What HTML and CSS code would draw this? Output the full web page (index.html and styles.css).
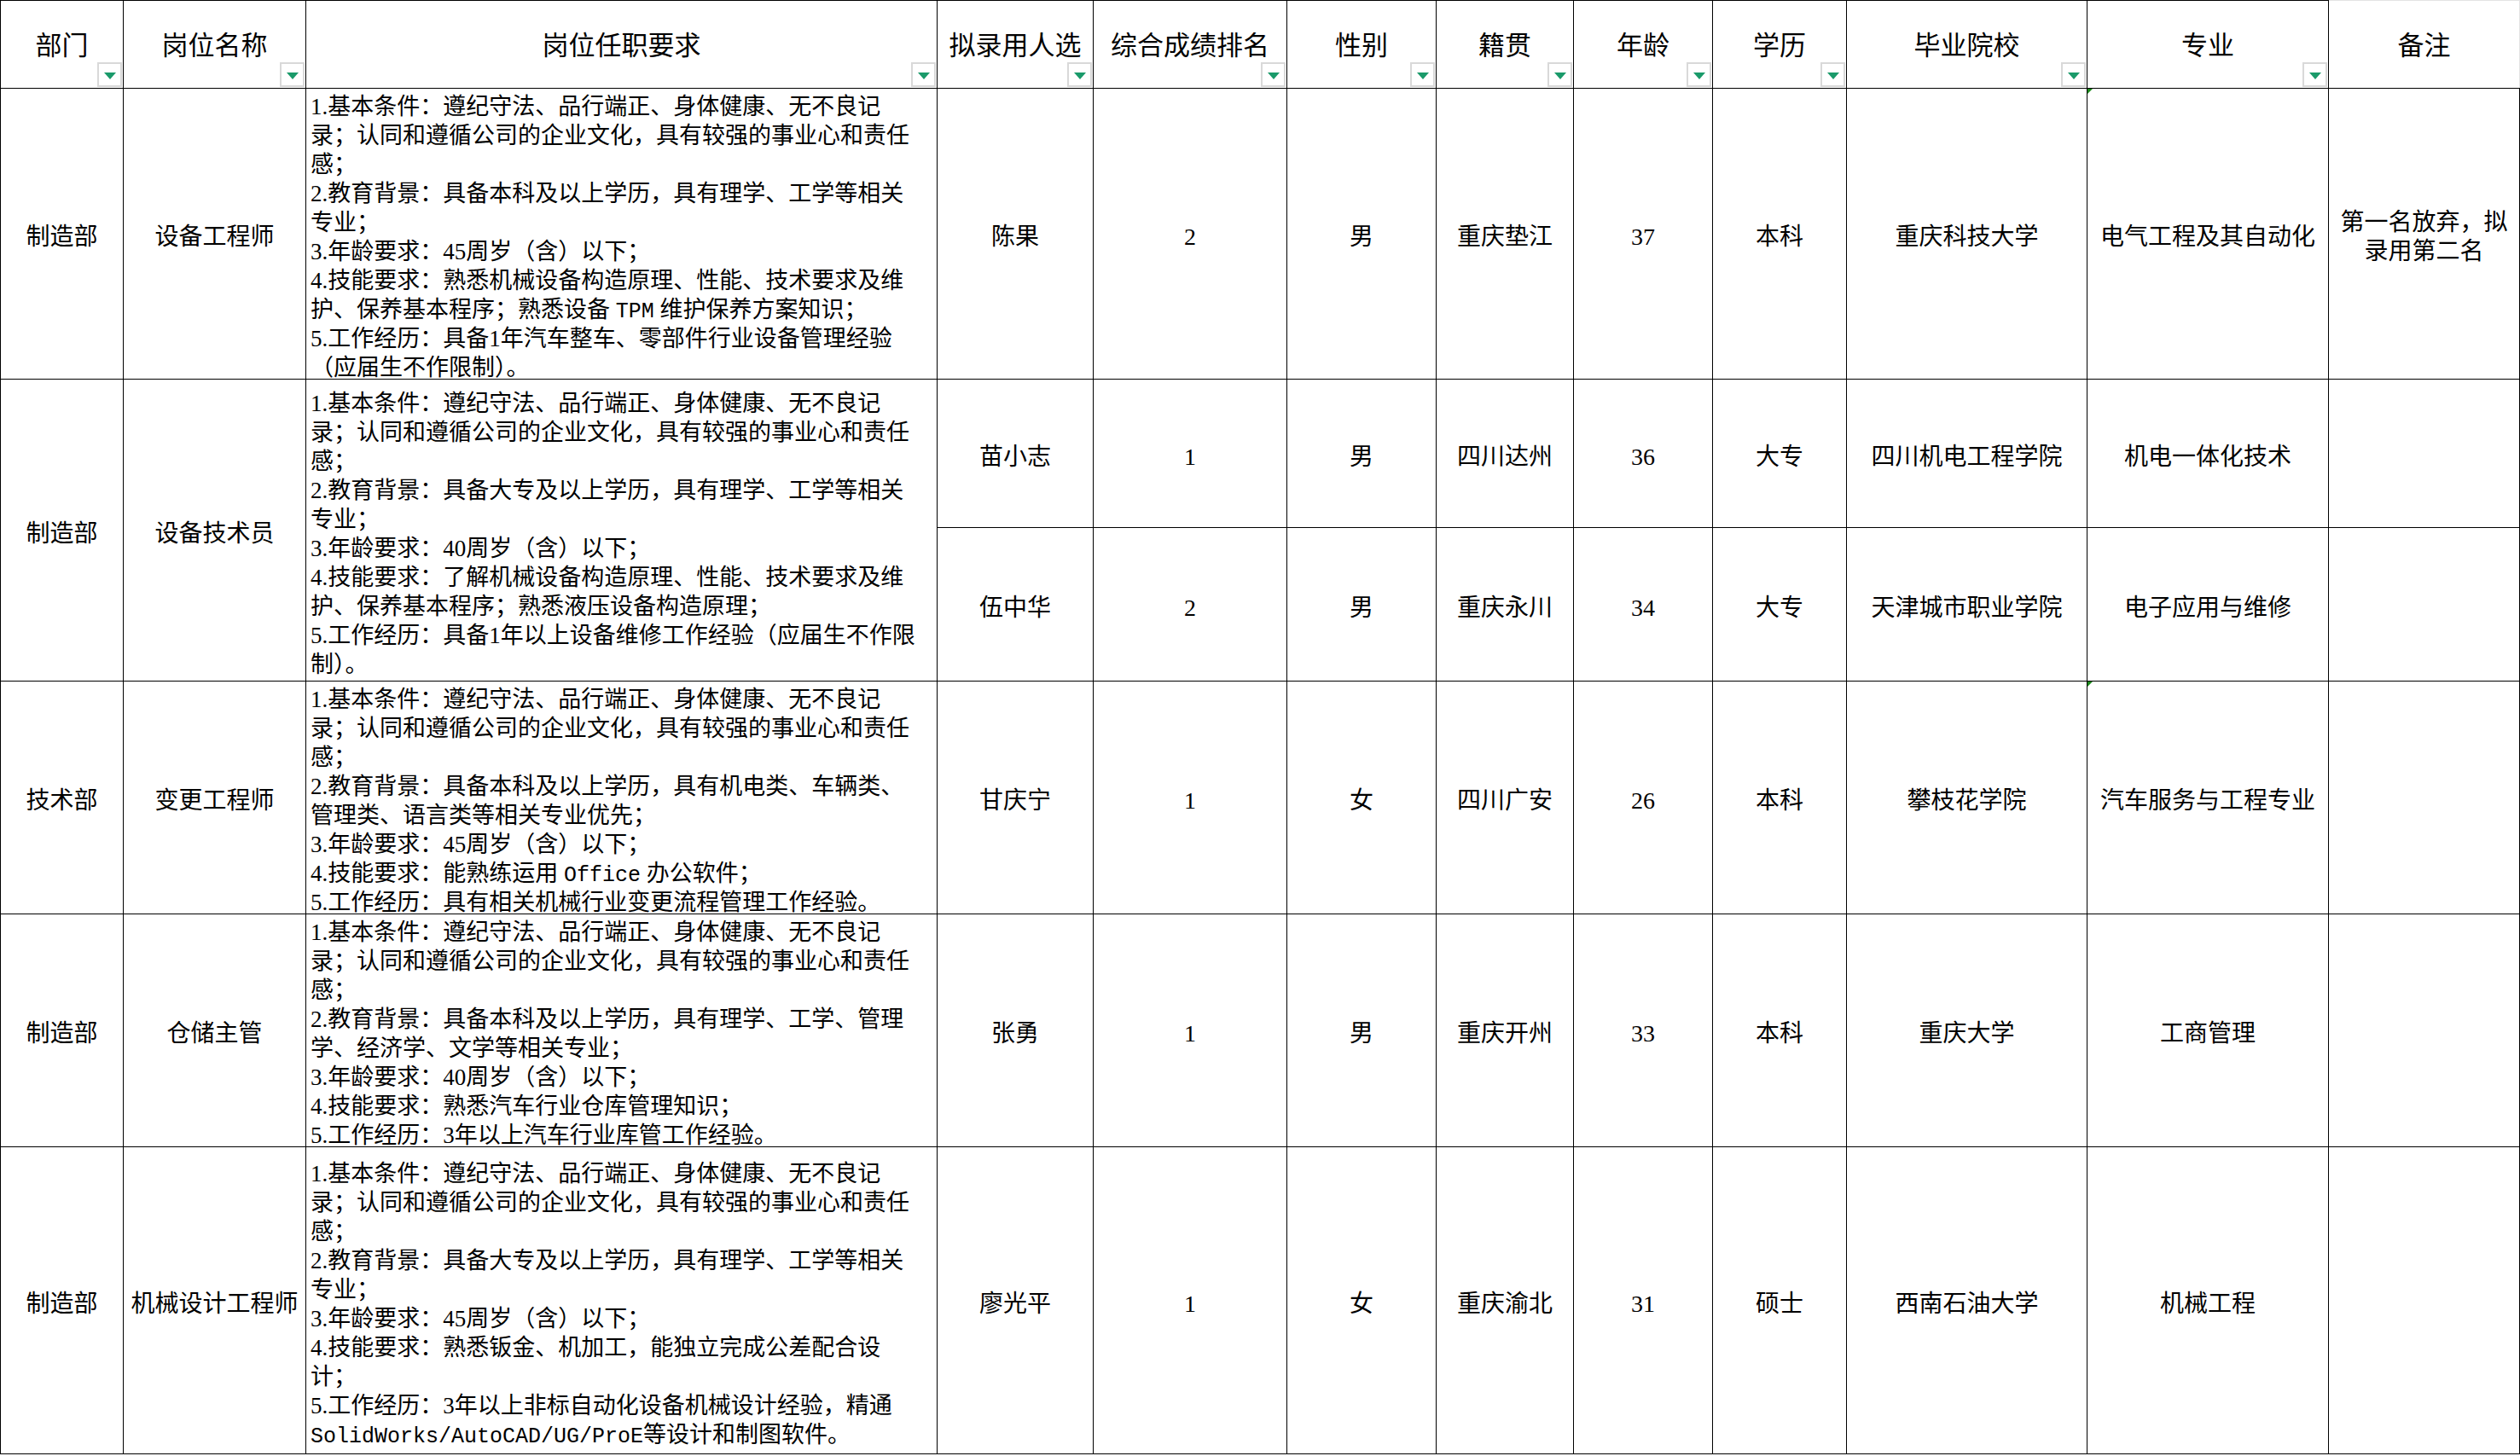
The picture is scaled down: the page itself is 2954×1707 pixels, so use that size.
FILE: index.html
```html
<!DOCTYPE html>
<html lang="zh-CN">
<head>
<meta charset="utf-8">
<title>拟录用人员名单</title>
<link rel="stylesheet" href="styles.css">
</head>
<body>
<table class="sheet">
  <colgroup>
    <col class="c-dept"><col class="c-post"><col class="c-req"><col class="c-name"><col class="c-rank">
    <col class="c-sex"><col class="c-home"><col class="c-age"><col class="c-edu"><col class="c-school">
    <col class="c-major"><col class="c-note">
  </colgroup>
  <thead>
    <tr class="h-row">
      <th>部门<span class="flt"><svg viewBox="0 0 14 8" class="tri"><polygon points="0,0 14,0 7,8"/></svg></span></th>
      <th>岗位名称<span class="flt"><svg viewBox="0 0 14 8" class="tri"><polygon points="0,0 14,0 7,8"/></svg></span></th>
      <th>岗位任职要求<span class="flt"><svg viewBox="0 0 14 8" class="tri"><polygon points="0,0 14,0 7,8"/></svg></span></th>
      <th>拟录用人选<span class="flt"><svg viewBox="0 0 14 8" class="tri"><polygon points="0,0 14,0 7,8"/></svg></span></th>
      <th>综合成绩排名<span class="flt"><svg viewBox="0 0 14 8" class="tri"><polygon points="0,0 14,0 7,8"/></svg></span></th>
      <th>性别<span class="flt"><svg viewBox="0 0 14 8" class="tri"><polygon points="0,0 14,0 7,8"/></svg></span></th>
      <th>籍贯<span class="flt"><svg viewBox="0 0 14 8" class="tri"><polygon points="0,0 14,0 7,8"/></svg></span></th>
      <th>年龄<span class="flt"><svg viewBox="0 0 14 8" class="tri"><polygon points="0,0 14,0 7,8"/></svg></span></th>
      <th>学历<span class="flt"><svg viewBox="0 0 14 8" class="tri"><polygon points="0,0 14,0 7,8"/></svg></span></th>
      <th>毕业院校<span class="flt"><svg viewBox="0 0 14 8" class="tri"><polygon points="0,0 14,0 7,8"/></svg></span></th>
      <th>专业<span class="flt"><svg viewBox="0 0 14 8" class="tri"><polygon points="0,0 14,0 7,8"/></svg></span></th>
      <th class="h-note">备注</th>
    </tr>
  </thead>
  <tbody>
    <tr class="r1">
      <td>制造部</td>
      <td>设备工程师</td>
      <td class="req">
        <div>1.基本条件：遵纪守法、品行端正、身体健康、无不良记</div>
        <div>录；认同和遵循公司的企业文化，具有较强的事业心和责任</div>
        <div>感；</div>
        <div>2.教育背景：具备本科及以上学历，具有理学、工学等相关</div>
        <div>专业；</div>
        <div>3.年龄要求：45周岁（含）以下；</div>
        <div>4.技能要求：熟悉机械设备构造原理、性能、技术要求及维</div>
        <div>护、保养基本程序；熟悉设备 <span class="lat">TPM</span> 维护保养方案知识；</div>
        <div>5.工作经历：具备1年汽车整车、零部件行业设备管理经验</div>
        <div>（应届生不作限制）。</div>
      </td>
      <td>陈果</td>
      <td class="num">2</td>
      <td>男</td>
      <td>重庆垫江</td>
      <td class="num">37</td>
      <td>本科</td>
      <td>重庆科技大学</td>
      <td class="mark">电气工程及其自动化<i class="cm"></i></td>
      <td class="note">第一名放弃，拟录用第二名</td>
    </tr>
    <tr class="r2a">
      <td rowspan="2">制造部</td>
      <td rowspan="2">设备技术员</td>
      <td rowspan="2" class="req">
        <div>1.基本条件：遵纪守法、品行端正、身体健康、无不良记</div>
        <div>录；认同和遵循公司的企业文化，具有较强的事业心和责任</div>
        <div>感；</div>
        <div>2.教育背景：具备大专及以上学历，具有理学、工学等相关</div>
        <div>专业；</div>
        <div>3.年龄要求：40周岁（含）以下；</div>
        <div>4.技能要求：了解机械设备构造原理、性能、技术要求及维</div>
        <div>护、保养基本程序；熟悉液压设备构造原理；</div>
        <div>5.工作经历：具备1年以上设备维修工作经验（应届生不作限</div>
        <div>制）。</div>
      </td>
      <td>苗小志</td>
      <td class="num">1</td>
      <td>男</td>
      <td>四川达州</td>
      <td class="num">36</td>
      <td>大专</td>
      <td>四川机电工程学院</td>
      <td>机电一体化技术</td>
      <td></td>
    </tr>
    <tr class="r2b">
      <td>伍中华</td>
      <td class="num">2</td>
      <td>男</td>
      <td>重庆永川</td>
      <td class="num">34</td>
      <td>大专</td>
      <td>天津城市职业学院</td>
      <td>电子应用与维修</td>
      <td></td>
    </tr>
    <tr class="r3">
      <td>技术部</td>
      <td>变更工程师</td>
      <td class="req">
        <div>1.基本条件：遵纪守法、品行端正、身体健康、无不良记</div>
        <div>录；认同和遵循公司的企业文化，具有较强的事业心和责任</div>
        <div>感；</div>
        <div>2.教育背景：具备本科及以上学历，具有机电类、车辆类、</div>
        <div>管理类、语言类等相关专业优先；</div>
        <div>3.年龄要求：45周岁（含）以下；</div>
        <div>4.技能要求：能熟练运用 <span class="lat">Office</span> 办公软件；</div>
        <div>5.工作经历：具有相关机械行业变更流程管理工作经验。</div>
      </td>
      <td>甘庆宁</td>
      <td class="num">1</td>
      <td>女</td>
      <td>四川广安</td>
      <td class="num">26</td>
      <td>本科</td>
      <td>攀枝花学院</td>
      <td class="mark">汽车服务与工程专业<i class="cm"></i></td>
      <td></td>
    </tr>
    <tr class="r4">
      <td>制造部</td>
      <td>仓储主管</td>
      <td class="req">
        <div>1.基本条件：遵纪守法、品行端正、身体健康、无不良记</div>
        <div>录；认同和遵循公司的企业文化，具有较强的事业心和责任</div>
        <div>感；</div>
        <div>2.教育背景：具备本科及以上学历，具有理学、工学、管理</div>
        <div>学、经济学、文学等相关专业；</div>
        <div>3.年龄要求：40周岁（含）以下；</div>
        <div>4.技能要求：熟悉汽车行业仓库管理知识；</div>
        <div>5.工作经历：3年以上汽车行业库管工作经验。</div>
      </td>
      <td>张勇</td>
      <td class="num">1</td>
      <td>男</td>
      <td>重庆开州</td>
      <td class="num">33</td>
      <td>本科</td>
      <td>重庆大学</td>
      <td>工商管理</td>
      <td></td>
    </tr>
    <tr class="r5">
      <td>制造部</td>
      <td>机械设计工程师</td>
      <td class="req">
        <div>1.基本条件：遵纪守法、品行端正、身体健康、无不良记</div>
        <div>录；认同和遵循公司的企业文化，具有较强的事业心和责任</div>
        <div>感；</div>
        <div>2.教育背景：具备大专及以上学历，具有理学、工学等相关</div>
        <div>专业；</div>
        <div>3.年龄要求：45周岁（含）以下；</div>
        <div>4.技能要求：熟悉钣金、机加工，能独立完成公差配合设</div>
        <div>计；</div>
        <div>5.工作经历：3年以上非标自动化设备机械设计经验，精通</div>
        <div><span class="lat">SolidWorks/AutoCAD/UG/ProE</span>等设计和制图软件。</div>
      </td>
      <td>廖光平</td>
      <td class="num">1</td>
      <td>女</td>
      <td>重庆渝北</td>
      <td class="num">31</td>
      <td>硕士</td>
      <td>西南石油大学</td>
      <td>机械工程</td>
      <td></td>
    </tr>
  </tbody>
</table>
</body>
</html>
```

FILE: styles.css
```css
html, body {
  margin: 0;
  padding: 0;
  background: #ffffff;
}

.sheet {
  border-collapse: collapse;
  table-layout: fixed;
  width: 2953px;
  font-family: "Liberation Serif", "Noto Sans CJK SC", serif;
  color: #000;
}

.c-dept { width: 144px; }
.c-post { width: 214px; }
.c-req { width: 740px; }
.c-name { width: 183px; }
.c-rank { width: 227px; }
.c-sex { width: 175px; }
.c-home { width: 161px; }
.c-age { width: 163px; }
.c-edu { width: 157px; }
.c-school { width: 282px; }
.c-major { width: 283px; }
.c-note { width: 224px; }

.sheet th,
.sheet td {
  border: 1px solid #000;
  padding: 8px 2px 0 2px;
  text-align: center;
  vertical-align: middle;
  position: relative;
  white-space: nowrap;
  overflow: visible;
}

.sheet th {
  font-weight: normal;
  font-size: 31px;
  line-height: 36px;
  padding-top: 4px;
}

.sheet td {
  font-size: 28px;
  line-height: 34px;
}

.h-row { height: 103px; }
.r1 { height: 340px; }
.r2a { height: 174px; }
.r2b { height: 180px; }
.r3 { height: 272px; }
.r4 { height: 270px; }
.r5 { height: 360px; }

.sheet th.h-note {
  border-top-color: #e3e3e3;
  border-right-color: #e3e3e3;
}

.flt {
  position: absolute;
  right: 1px;
  bottom: 1px;
  width: 25px;
  height: 25px;
  border: 2px solid #d9d9d9;
  background: #fff;
  display: flex;
  align-items: center;
  justify-content: center;
}

.tri {
  width: 14px;
  height: 8px;
  margin-top: 3px;
  fill: #1a9a6a;
}

.sheet td.req {
  text-align: left;
  font-size: 27px;
  line-height: 34px;
  padding: 0 4px 0 5px;
}

.req div {
  box-sizing: border-box;
  height: 34px;
  padding-top: 4px;
  line-height: 34px;
  overflow: visible;
}

.lat {
  font-family: "Liberation Mono", monospace;
  font-size: 25px;
  line-height: 1;
}

.sheet td.note {
  white-space: normal;
  line-height: 34px;
  padding: 8px 8px 0 8px;
}

.cm {
  position: absolute;
  left: 0;
  top: 0;
  width: 0;
  height: 0;
  border-top: 6px solid #1b8a1b;
  border-right: 6px solid transparent;
}
```
